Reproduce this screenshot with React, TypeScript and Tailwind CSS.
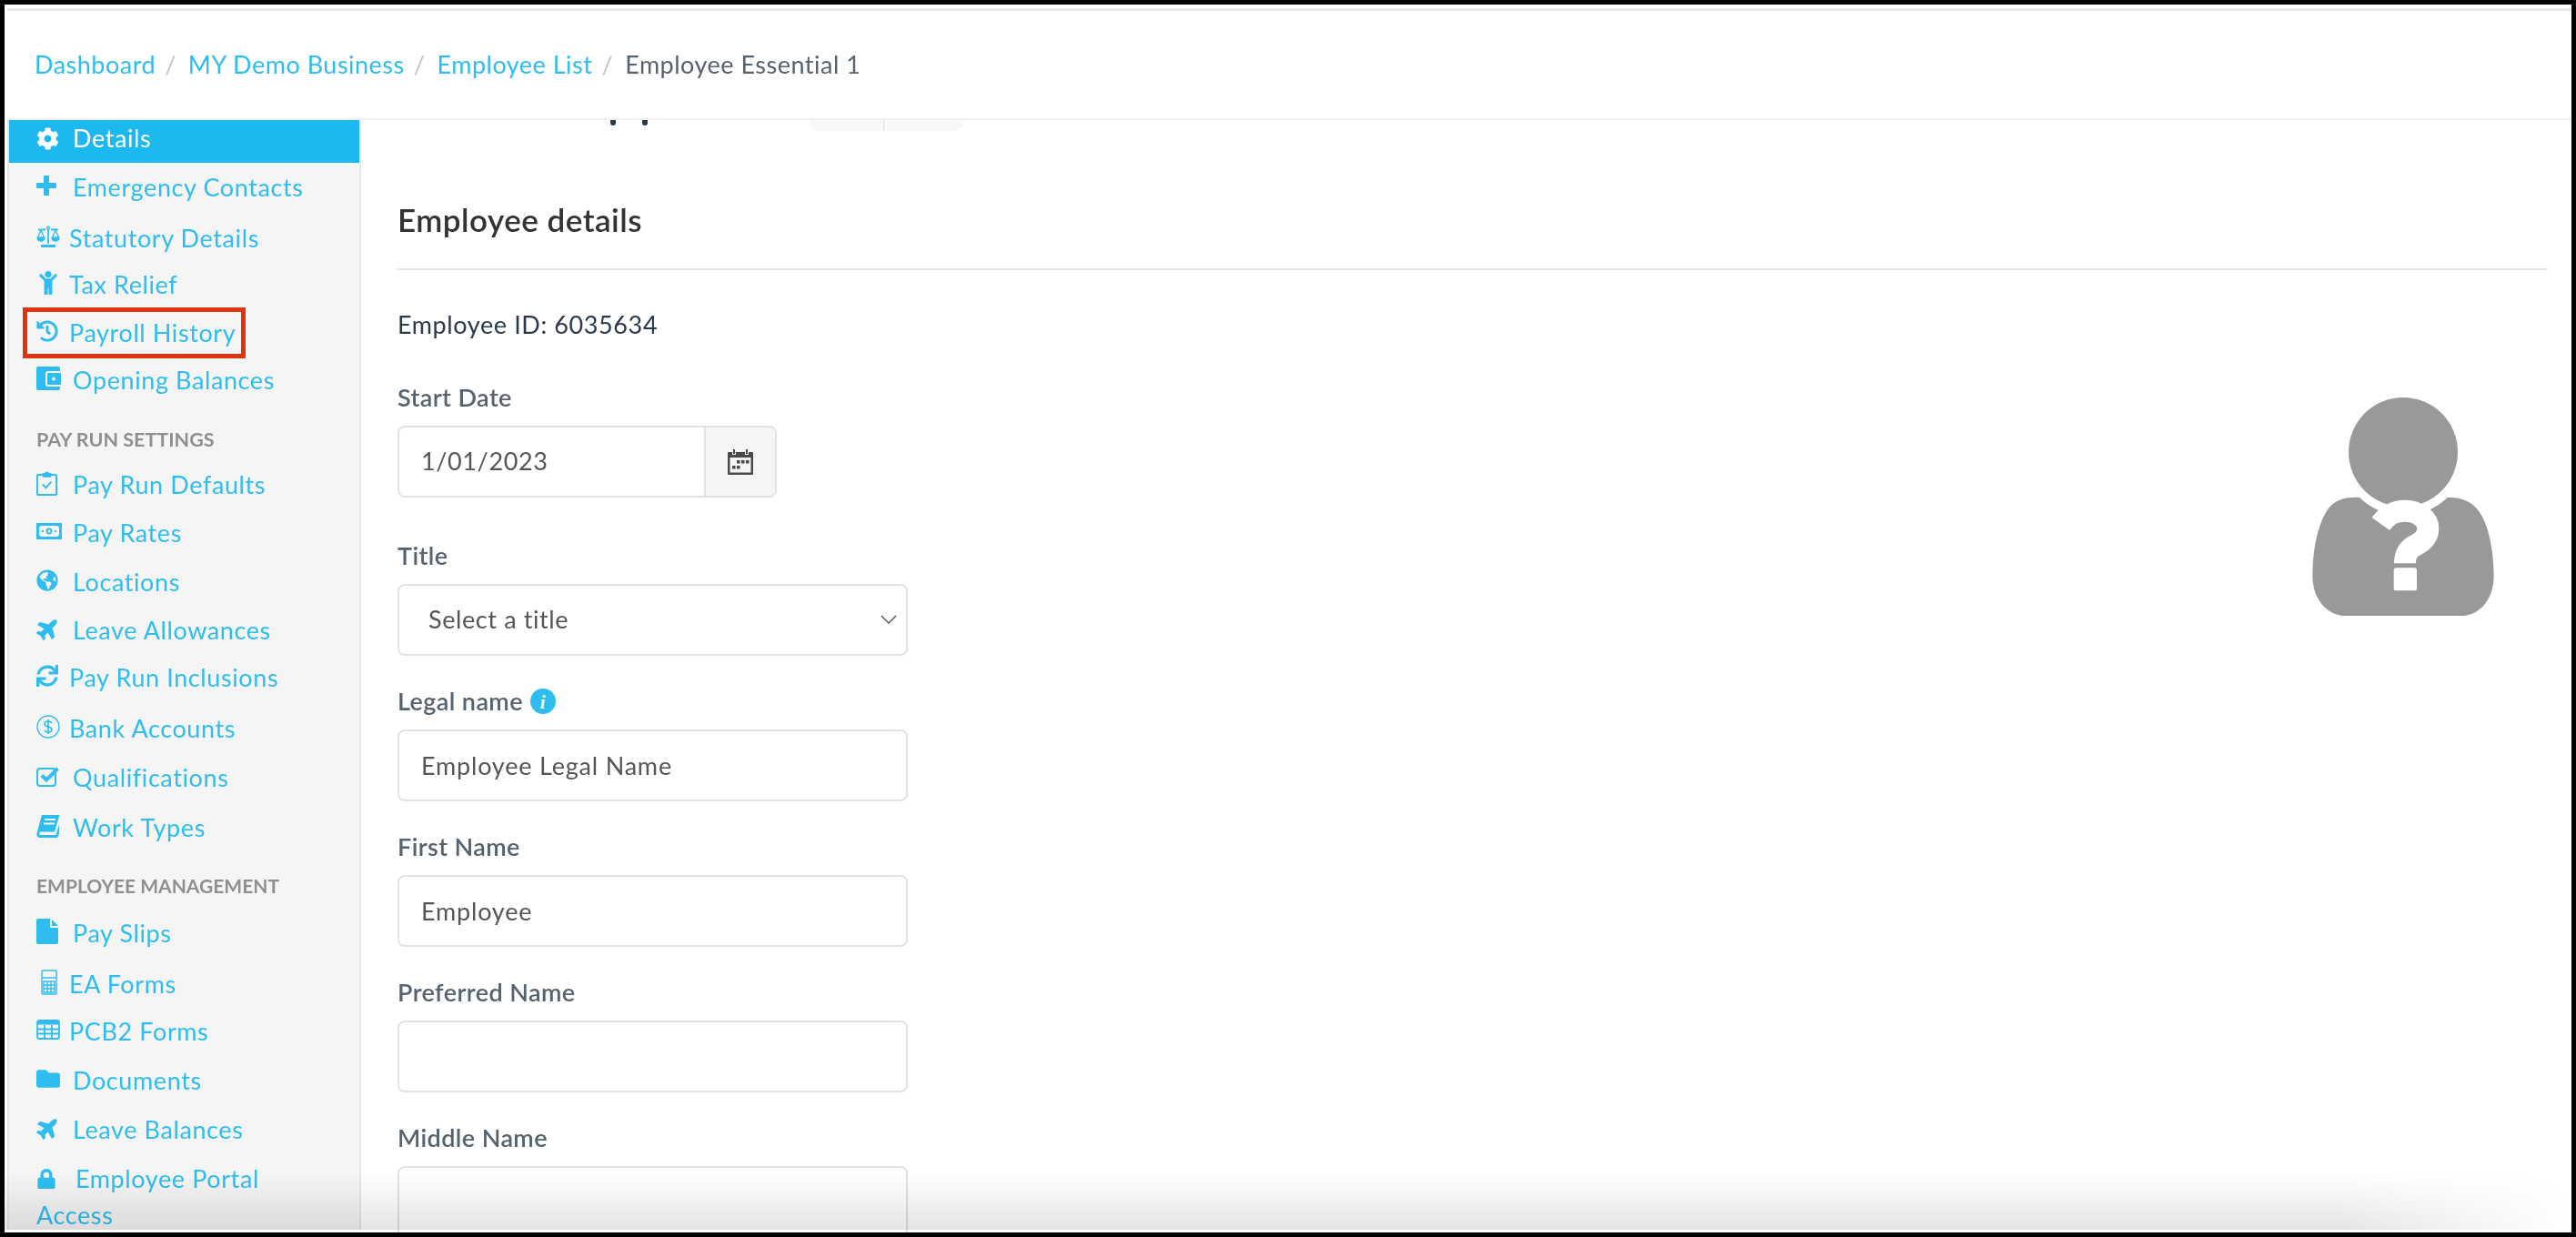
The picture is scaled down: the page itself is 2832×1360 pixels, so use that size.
import React from 'react';
import { FaChild, FaCog, FaFolder, FaGlobeAmericas, FaHistory, FaLock, FaPlane, FaSync } from 'react-icons/fa';

const PlusIcon = () => (
  <svg viewBox="0 0 22 22" className="h-[22px] w-[22px]" fill="currentColor">
    <path d="M8 1a1 1 0 0 1 1-1h4a1 1 0 0 1 1 1v7h7a1 1 0 0 1 1 1v4a1 1 0 0 1-1 1h-7v7a1 1 0 0 1-1 1H9a1 1 0 0 1-1-1v-7H1a1 1 0 0 1-1-1V9a1 1 0 0 1 1-1h7z" />
  </svg>
);

const ScaleIcon = () => (
  <svg viewBox="0 0 26 24" className="h-[24px] w-[26px]" fill="none" stroke="currentColor" strokeWidth="1.300">
    <path d="M2 4.500h8M16 4.500h8M13 4v16" strokeWidth="1.800" />
    <circle cx="13" cy="2.500" r="1.500" />
    <path d="M5 5l-3.500 8h7zM21 5l-3.500 8h7z" />
    <path d="M1 14h8c-.5 2-2 3-4 3s-3.500-1-4-3zM17 14h8c-.5 2-2 3-4 3s-3.500-1-4-3z" fill="currentColor" />
    <path d="M5 22.500h16" strokeWidth="3" />
  </svg>
);

const WalletIcon = () => (
  <svg viewBox="0 0 28 26" className="h-[26px] w-[28px]">
    <rect width="26" height="26" rx="2" fill="currentColor" />
    <rect x="11" y="6" width="17" height="15" rx="2" fill="currentColor" stroke="#f5f5f5" strokeWidth="2" />
    <circle cx="19" cy="13.500" r="2" fill="#f5f5f5" />
  </svg>
);

const ClipboardIcon = () => (
  <svg viewBox="0 0 24 28" className="h-[27px] w-[23px]" fill="none" stroke="currentColor" strokeWidth="2">
    <rect x="1" y="4" width="22" height="23" rx="1" />
    <path d="M8 5V3h2.500a1.500 1.500 0 0 1 3 0H16v3H8z" fill="currentColor" />
    <path d="M7 15l4 4 6-7" />
  </svg>
);

const MoneyIcon = () => (
  <svg viewBox="0 0 28 18" className="h-[18px] w-[28px]">
    <rect width="28" height="18" rx="1" fill="currentColor" />
    <rect x="3" y="3" width="22" height="12" rx="3" fill="#f5f5f5" />
    <circle cx="14" cy="9" r="2.500" fill="none" stroke="currentColor" strokeWidth="1.800" />
    <circle cx="7" cy="9" r="1.200" fill="currentColor" />
    <circle cx="21" cy="9" r="1.200" fill="currentColor" />
  </svg>
);

const DollarIcon = () => (
  <svg viewBox="0 0 26 26" className="h-[26px] w-[26px]" fill="none" stroke="currentColor" strokeWidth="1.400">
    <circle cx="13" cy="13" r="12" />
    <path d="M17 9c-1-1.500-2.500-2-4-2-2 0-4 1-4 3s2 2.500 4 3 4 1 4 3-2 3-4 3-3-.5-4-2M13 5v16" strokeWidth="1.700" />
  </svg>
);

const CheckIcon = () => (
  <svg viewBox="0 0 26 23" className="h-[23px] w-[26px]" fill="none" stroke="currentColor">
    <rect x="1" y="3" width="20" height="19" rx="3" strokeWidth="2" />
    <path d="M6 10.500l5 5L23.500 3" strokeWidth="4" />
  </svg>
);

const BookIcon = () => (
  <svg viewBox="0 0 26 25" className="h-[25px] w-[26px]" fill="currentColor">
    <path d="M6 0h19.500L20 18.500H5c-2 0-2.500 3.500 0 3.500h16.500L25 10.500V21l-2 4H4c-3 0-4-2.500-3.500-5z" />
    <path d="M9 5h12M8 9.500h12" stroke="#f5f5f5" strokeWidth="2" />
  </svg>
);

const FileIcon = () => (
  <svg viewBox="0 0 24 28" className="h-[28px] w-[24px]" fill="currentColor">
    <path d="M0 2a2 2 0 0 1 2-2h13v10h9v16a2 2 0 0 1-2 2H2a2 2 0 0 1-2-2z" />
    <path d="M17 1l7 7h-7z" />
  </svg>
);

const CalcIcon = () => (
  <svg viewBox="0 0 18 28" className="h-[28px] w-[18px]" fill="none" stroke="currentColor" strokeWidth="1.400">
    <rect x="1" y="1" width="16" height="26" rx="1" />
    <path d="M1 9h16M3 13h12v12H3zM7 13v12M11 13v12M3 17h12M3 21h12" />
  </svg>
);

const TableIcon = () => (
  <svg viewBox="0 0 26 22" className="h-[22px] w-[26px]" fill="none" stroke="currentColor" strokeWidth="1.800">
    <rect x="1" y="1" width="24" height="20" rx="2" />
    <path d="M1 3.500h24" strokeWidth="4" />
    <path d="M1 10.500h24M1 15.500h24M9 6v15M17 6v15" />
  </svg>
);

const CalendarIcon = () => (
  <svg viewBox="0 0 28 28" className="h-[28px] w-[28px]" fill="#4a4a4a">
    <rect y="3" width="28" height="25" rx="1" />
    <rect x="2.500" y="9" width="23" height="16.500" fill="#f3f5f6" />
    <path d="M7 0v6M21 0v6" stroke="#f3f5f6" strokeWidth="4" />
    <path d="M7 0v5M21 0v5" stroke="#4a4a4a" strokeWidth="2" />
    <path d="M10 12h3.500v3.500H10zM15 12h3.500v3.500H15zM20 12h3.500v3.500H20zM5 18h3.500v3.500H5zM10 18h3.500v3.500H10z" />
  </svg>
);

const PersonIcon = () => (
  <svg viewBox="190 113 598 720" className="h-[240px] w-[200px]">
    <circle cx="489" cy="293" r="180" fill="#999" />
    <path
      d="M345 443A208 208 0 0 0 635 443C680 440 715 455 740 490C770 530 788 620 788 700C788 780 740 833 680 833L300 833C240 833 190 780 190 700C190 620 205 540 235 490C260 450 300 440 345 443Z"
      fill="#999"
    />
    <path
      d="M415 530C440 495 465 487 495 487C540 487 571 515 571 545C571 575 550 590 525 603C505 615 495 630 495 660"
      fill="none"
      stroke="#fff"
      strokeWidth="72"
    />
    <rect x="458" y="675" width="76" height="75" rx="8" fill="#fff" />
  </svg>
);

const navOne = [
  { label: 'Emergency Contacts', icon: <PlusIcon />, h: 'h-[56px]', w: 'w-[40px]' },
  { label: 'Statutory Details', icon: <ScaleIcon />, h: 'h-[51px]', w: 'w-[36px]' },
  { label: 'Tax Relief', icon: <FaChild className="text-[26px]" />, h: 'h-[53px]', w: 'w-[36px]' },
  { label: 'Payroll History', icon: <FaHistory className="text-[24px]" />, h: 'h-[52px]', w: 'w-[36px]', boxed: true },
  { label: 'Opening Balances', icon: <WalletIcon />, h: 'h-[66px]', w: 'w-[40px]' },
];

const navTwo = [
  { label: 'Pay Run Defaults', icon: <ClipboardIcon />, h: 'h-[53px]', w: 'w-[40px]' },
  { label: 'Pay Rates', icon: <MoneyIcon />, h: 'h-[54px]', w: 'w-[40px]' },
  { label: 'Locations', icon: <FaGlobeAmericas className="text-[24px]" />, h: 'h-[53px]', w: 'w-[40px]' },
  { label: 'Leave Allowances', icon: <FaPlane className="-rotate-45 text-[26px]" />, h: 'h-[52px]', w: 'w-[40px]' },
  { label: 'Pay Run Inclusions', icon: <FaSync className="text-[24px]" />, h: 'h-[56px]', w: 'w-[36px]' },
  { label: 'Bank Accounts', icon: <DollarIcon />, h: 'h-[54px]', w: 'w-[36px]' },
  { label: 'Qualifications', icon: <CheckIcon />, h: 'h-[55px]', w: 'w-[40px]' },
  { label: 'Work Types', icon: <BookIcon />, h: 'h-[64px]', w: 'w-[40px]' },
];

const navThree = [
  { label: 'Pay Slips', icon: <FileIcon />, h: 'h-[56px]', w: 'w-[40px]' },
  { label: 'EA Forms', icon: <span className="pl-[5px]"><CalcIcon /></span>, h: 'h-[52px]', w: 'w-[36px]' },
  { label: 'PCB2 Forms', icon: <TableIcon />, h: 'h-[54px]', w: 'w-[36px]' },
  { label: 'Documents', icon: <FaFolder className="text-[26px]" />, h: 'h-[54px]', w: 'w-[40px]' },
  { label: 'Leave Balances', icon: <FaPlane className="-rotate-45 text-[26px]" />, h: 'h-[52px]', w: 'w-[40px]' },
];

type NavItem = { label: string; icon: React.ReactNode; h: string; w: string; boxed?: boolean };

const NavRow = ({ item }: { item: NavItem }) => (
  <a className={`relative flex items-start pl-[30px] text-[#2fbdf0] ${item.h}`}>
    <span className={`flex h-[36px] shrink-0 items-center pb-[4px] ${item.w}`}>{item.icon}</span>
    <span className="leading-[36px]">{item.label}</span>
    {item.boxed && (
      <span className="absolute left-[15px] top-[-10px] h-[56px] w-[245px] border-[5px] border-[#e0340f]" />
    )}
  </a>
);

const Field = ({ label, value, info }: { label: string; value?: string; info?: boolean }) => (
  <div className="mt-[26px] flex flex-col">
    <label className="flex h-[55px] items-center gap-[8px] pb-[7px] font-semibold tracking-[0.4px] text-[#56626e]">
      {label}
      {info && (
        <span className="flex h-[28px] w-[28px] items-center justify-center rounded-full bg-[#2fbdf0] font-['Liberation_Serif',serif] text-[22px] font-bold italic text-white">
          i
        </span>
      )}
    </label>
    <input
      readOnly
      value={value ?? ''}
      className="h-[79px] w-[561px] rounded-[8px] border-2 border-[#dde3e6] bg-transparent px-[24px] tracking-[0.8px] text-[#555]"
    />
  </div>
);

export default function App() {
  return (
    <div className="h-[1360px] w-[2832px] overflow-hidden bg-black p-[5px] font-['Lato','Open_Sans',sans-serif] text-[27px] tracking-[0.6px]">
      <div className="relative h-full overflow-hidden bg-white pb-[3px] pl-[3px] pt-[4px]">
        <div className="flex h-full flex-col border-t-[3px] border-[#e8e8e8]">
          <header className="flex h-[120px] shrink-0 items-center border-b-2 border-[#f0f0f0] pl-[30px] tracking-[0.5px] text-[#2fbdf0]">
            <a>Dashboard</a>
            <span className="ml-[10px] mr-[13px] text-[#c4c4c4]">/</span>
            <a>MY Demo Business</a>
            <span className="ml-[10px] mr-[13px] text-[#c4c4c4]">/</span>
            <a>Employee List</a>
            <span className="ml-[10px] mr-[13px] text-[#c4c4c4]">/</span>
            <span className="text-[#56626e]">Employee Essential 1</span>
          </header>

          <div className="flex min-h-0 flex-1">
            <aside className="w-[389px] shrink-0 overflow-hidden border-x-2 border-[#e6e6e6] bg-[#f5f5f5]">
              <div className="flex h-[47px] items-start bg-[#1cb8ee] pl-[30px] pt-[2px] text-white">
                <span className="flex h-[36px] w-[40px] shrink-0 items-center">
                  <FaCog className="text-[25px]" />
                </span>
                <span className="leading-[36px]">Details</span>
              </div>
              <nav className="mt-[9px] flex flex-col">
                {navOne.map((item) => (
                  <NavRow key={item.label} item={item} />
                ))}
                <div className="flex h-[35px] items-center pl-[30px] text-[21.500px] font-bold uppercase tracking-normal text-[#8f8f8f]">
                  Pay Run Settings
                </div>
                <div className="h-[14px]" />
                {navTwo.map((item) => (
                  <NavRow key={item.label} item={item} />
                ))}
                <div className="flex h-[35px] items-center pl-[30px] text-[21px] font-bold uppercase tracking-normal text-[#8f8f8f]">
                  Employee Management
                </div>
                <div className="h-[17px]" />
                {navThree.map((item) => (
                  <NavRow key={item.label} item={item} />
                ))}
                <div className="pl-[30px] pr-[60px] leading-[40px] text-[#2fbdf0]">
                  <span className="mr-[21px] inline-block align-[-1px]">
                    <FaLock className="text-[22px]" />
                  </span>
                  Employee Portal Access
                </div>
              </nav>
            </aside>

            <main className="min-w-0 flex-1 pl-[40px] pr-[26px]">
              <div className="flex h-[12px] overflow-hidden">
                <span className="ml-[234px] h-[6px] w-[6px] rounded-b-full bg-[#2b3a4a]" />
                <span className="ml-[29px] h-[6px] w-[6px] rounded-b-full bg-[#2b3a4a]" />
                <span className="ml-[178px] h-[12px] w-[83px] rounded-bl-[10px] border-r-2 border-[#e6e8ea] bg-[#f7f8f9]" />
                <span className="ml-[2px] h-[12px] w-[84px] rounded-br-[10px] bg-[#f7f8f9]" />
              </div>
              <h2 className="mt-[75px] text-[35px] font-semibold leading-[44px] tracking-[0.5px] text-[#333]">Employee details</h2>
              <div className="mt-[32px] border-t-2 border-[#e2e4e6]" />
              <div className="flex justify-between">
                <div>
                  <p className="mt-[42px] leading-[36px] text-[#2b3a4a]">Employee ID: 6035634</p>
                  <label className="mt-[44px] block font-semibold leading-[36px] tracking-[0.4px] text-[#56626e]">Start Date</label>
                  <div className="mt-[13px] flex h-[79px] w-[417px] overflow-hidden rounded-[8px] border-2 border-[#dde3e6]">
                    <input readOnly value="1/01/2023" className="min-w-0 flex-1 px-[24px] text-[#555]" />
                    <span className="flex w-[78px] shrink-0 items-center justify-center border-l-2 border-[#dde3e6] bg-[#f3f5f6]">
                      <CalendarIcon />
                    </span>
                  </div>
                  <div className="mt-[40px] flex flex-col">
                    <label className="flex h-[55px] items-center pb-[7px] font-semibold tracking-[0.4px] text-[#56626e]">Title</label>
                    <div className="flex h-[79px] w-[561px] items-center justify-between rounded-[8px] border-2 border-[#dde3e6] pl-[32px] pr-[10px] text-[#555]">
                      <span>Select a title</span>
                      <svg viewBox="0 0 20 12" className="h-[11px] w-[18px]" fill="none" stroke="#555" strokeWidth="1.600">
                        <path d="M1 1l9 9 9-9" />
                      </svg>
                    </div>
                  </div>
                  <Field label="Legal name" value="Employee Legal Name" info />
                  <Field label="First Name" value="Employee" />
                  <Field label="Preferred Name" />
                  <Field label="Middle Name" />
                </div>
                <div className="mr-[59px] mt-[140px]">
                  <PersonIcon />
                </div>
              </div>
            </main>
          </div>
        </div>
        <div className="pointer-events-none absolute bottom-[3px] left-0 right-0 h-[62px] bg-gradient-to-b from-white to-[#e4e4e4] mix-blend-multiply [mask-image:linear-gradient(to_left,transparent,black_260px)]" />
      </div>
    </div>
  );
}
